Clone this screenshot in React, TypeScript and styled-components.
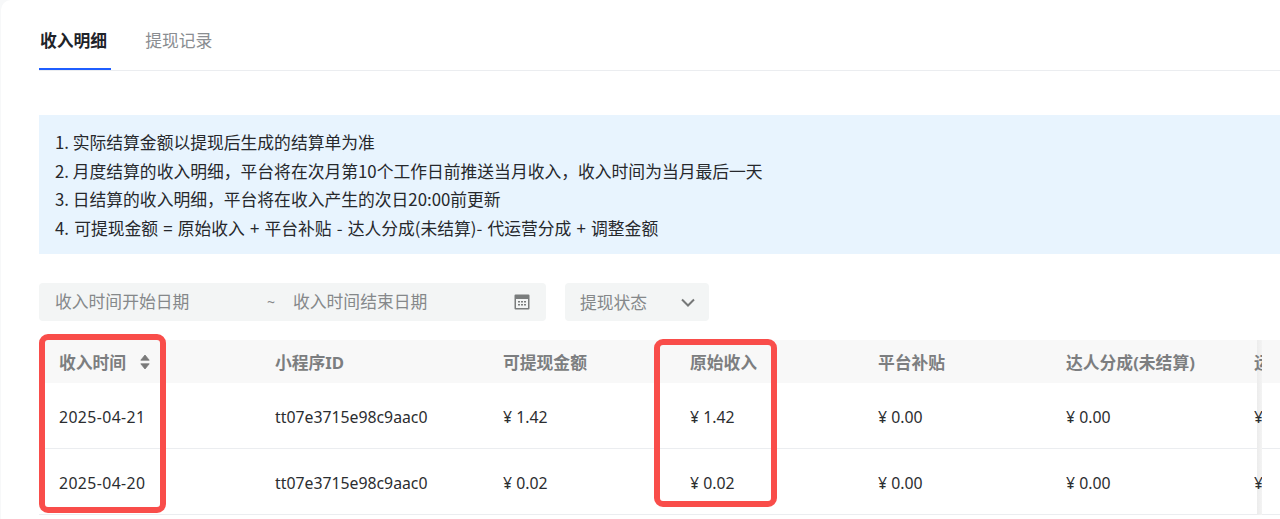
import React from "react";
import styled, { createGlobalStyle } from "styled-components";

const FONT = `"Noto Sans", "Noto Sans CJK SC", sans-serif`;

const notes = [
  { text: "1. 实际结算金额以提现后生成的结算单为准" },
  { text: "2. 月度结算的收入明细，平台将在次月第10个工作日前推送当月收入，收入时间为当月最后一天" },
  { text: "3. 日结算的收入明细，平台将在收入产生的次日20:00前更新" },
  { text: "4. 可提现金额 = 原始收入 + 平台补贴 - 达人分成(未结算)- 代运营分成 + 调整金额", spaced: true },
];

const columns = [
  { label: "收入时间", width: 216, sortable: true },
  { label: "小程序ID", width: 228 },
  { label: "可提现金额", width: 187 },
  { label: "原始收入", width: 188 },
  { label: "平台补贴", width: 188 },
  { label: "达人分成(未结算)", width: 188 },
];

const rows = [
  ["2025-04-21", "tt07e3715e98c9aac0", "¥ 1.42", "¥ 1.42", "¥ 0.00", "¥ 0.00"],
  ["2025-04-20", "tt07e3715e98c9aac0", "¥ 0.02", "¥ 0.02", "¥ 0.00", "¥ 0.00"],
];

const App: React.FC = () => {
  return (
    <>
      <GlobalStyle />
      <Card>
        <Tabs>
          <Tab $active>收入明细</Tab>
          <Tab>提现记录</Tab>
        </Tabs>
        <Notice>
          {notes.map((line) => (
            <NoteLine key={line.text} $spaced={line.spaced}>
              {line.text}
            </NoteLine>
          ))}
        </Notice>
        <Filters>
          <DateRange>
            <DateText>收入时间开始日期</DateText>
            <Tilde>~</Tilde>
            <DateText>收入时间结束日期</DateText>
            <CalendarIcon />
          </DateRange>
          <Select>
            <SelectText>提现状态</SelectText>
            <ChevronIcon />
          </Select>
        </Filters>
        <TableWrap>
          <HeadRow>
            {columns.map((col) => (
              <HeadCell key={col.label} $width={col.width}>
                {col.label}
                {col.sortable && <SortIcon />}
              </HeadCell>
            ))}
            <ClippedCell $head>
              <span>运营分成</span>
            </ClippedCell>
          </HeadRow>
          {rows.map((row) => (
            <BodyRow key={row[0]}>
              {row.map((value, i) => (
                <BodyCell key={i} $width={columns[i].width}>
                  {value}
                </BodyCell>
              ))}
              <ClippedCell>
                <span>¥ 0.00</span>
              </ClippedCell>
            </BodyRow>
          ))}
          <FixedShadow />
        </TableWrap>
        <TimeHighlight />
        <IncomeHighlight />
      </Card>
    </>
  );
};

const CalendarIcon = () => (
  <svg
    width="16"
    height="16"
    viewBox="0 0 16 16"
    style={{ flex: "none", marginLeft: "auto" }}
  >
    <path
      fillRule="evenodd"
      fill="#7a7d7d"
      d="M1.5 0.5h13a1 1 0 0 1 1 1v13a1 1 0 0 1-1 1h-13a1 1 0 0 1-1-1v-13a1 1 0 0 1 1-1zM2 5v9h12V5H2z"
    />
    <path
      fill="#7a7d7d"
      d="M4 7h2v1.5H4zM7 7h2v1.5H7zM10 7h2v1.5h-2zM4 10h2v1.5H4zM7 10h2v1.5H7zM10 10h2v1.5h-2z"
    />
  </svg>
);

const ChevronIcon = () => (
  <svg width="14" height="9" viewBox="0 0 14 9">
    <path d="M1 1.5l6 6 6-6" fill="none" stroke="#767878" strokeWidth="2" />
  </svg>
);

const SortIcon = () => (
  <svg width="10" height="16" viewBox="0 0 10 16" style={{ marginLeft: 14 }}>
    <path
      fill="#7a7a7a"
      stroke="#7a7a7a"
      strokeWidth="0.8"
      strokeLinejoin="round"
      d="M5 1l4.2 5.2h-8.4zM5 15l-4.2-5.2h8.4z"
    />
  </svg>
);

const GlobalStyle = createGlobalStyle`
  html, body {
    margin: 0;
    height: 100%;
    overflow: hidden;
    background: #f7f8f9;
    font-family: ${FONT};
  }
`;

const Card = styled.div`
  position: relative;
  width: 1279px;
  height: 519px;
  margin-left: 1px;
  box-sizing: border-box;
  padding: 0 0 0 38px;
  background: #fff;
  border-top-left-radius: 10px;
  overflow: hidden;
`;

const Tabs = styled.div`
  display: flex;
  gap: 32px;
  height: 71px;
  box-sizing: border-box;
  border-bottom: 1px solid #ebedf0;
`;

const Tab = styled.div<{ $active?: boolean }>`
  height: 70px;
  box-sizing: border-box;
  padding: 29px ${(p) => (p.$active ? "4px 0 1px" : "2px 0")};
  font-size: 16.8px;
  line-height: 24px;
  font-weight: ${(p) => (p.$active ? 700 : 400)};
  color: ${(p) => (p.$active ? "#1f2329" : "#8a8d91")};
  border-bottom: 2px solid ${(p) => (p.$active ? "#1f5eff" : "transparent")};
`;

const Notice = styled.div`
  margin-top: 44px;
  height: 139px;
  box-sizing: border-box;
  padding: 13px 16px;
  background: #e8f4fe;
  color: #26282c;
  font-family: "Noto Sans CJK SC", sans-serif;
  font-size: 16.8px;
  line-height: 28.6px;
`;

const NoteLine = styled.p<{ $spaced?: boolean }>`
  margin: 0;
  word-spacing: ${(p) => (p.$spaced ? "1.4px" : "normal")};
`;

const Filters = styled.div`
  display: flex;
  gap: 19px;
  margin-top: 29px;
`;

const fieldBase = `
  height: 38px;
  box-sizing: border-box;
  display: flex;
  align-items: center;
  background: #f3f5f5;
  border-radius: 4px;
  color: #85888a;
  font-size: 16.8px;
  line-height: 24px;
`;

const DateRange = styled.div`
  ${fieldBase}
  width: 507px;
  padding: 0 16px;
`;

const DateText = styled.span`
  width: 212px;
`;

const Tilde = styled.span`
  width: 26px;
  font-size: 14px;
`;

const Select = styled.div`
  ${fieldBase}
  width: 144px;
  padding: 0 14px 0 15px;
  justify-content: space-between;
`;

const SelectText = styled.span`
  padding-top: 1px;
`;

const TableWrap = styled.div`
  position: relative;
  margin-top: 19px;
  width: 1241px;
`;

const HeadRow = styled.div`
  display: flex;
  height: 43px;
  align-items: center;
  padding-top: 1px;
  box-sizing: border-box;
  background: #f8f8f8;
`;

const BodyRow = styled.div`
  display: flex;
  height: 66px;
  align-items: center;
  padding-top: 2px;
  border-bottom: 1px solid #ebedf0;
  box-sizing: border-box;
`;

const HeadCell = styled.div<{ $width: number }>`
  width: ${(p) => p.$width}px;
  flex: none;
  display: flex;
  align-items: center;
  font-size: 16.8px;
  font-weight: 700;
  color: #7c7e80;
  white-space: nowrap;

  &:first-child {
    padding-left: 20px;
  }
`;

const BodyCell = styled.div<{ $width: number }>`
  width: ${(p) => p.$width}px;
  flex: none;
  font-size: 15.8px;
  color: #2b2d30;
  white-space: nowrap;

  &:first-child {
    padding-left: 20px;
    letter-spacing: 0.4px;
  }
`;

const ClippedCell = styled.div<{ $head?: boolean }>`
  position: relative;
  z-index: 1;
  width: 8px;
  flex: none;
  overflow: hidden;
  white-space: nowrap;
  font-size: ${(p) => (p.$head ? 16.8 : 15.8)}px;
  font-weight: ${(p) => (p.$head ? 700 : 400)};
  color: ${(p) => (p.$head ? "#7c7e80" : "#2b2d30")};
`;

const FixedShadow = styled.div`
  position: absolute;
  top: 0;
  bottom: 0;
  left: 1218px;
  width: 5px;
  background: linear-gradient(90deg, #ececec, #f3f3f3);
  pointer-events: none;
`;

const Highlight = styled.div`
  position: absolute;
  box-sizing: border-box;
  border: 6px solid #f94d4a;
  border-radius: 9px;
  pointer-events: none;
`;

const TimeHighlight = styled(Highlight)`
  left: 38px;
  top: 334px;
  width: 127px;
  height: 179px;
`;

const IncomeHighlight = styled(Highlight)`
  left: 653px;
  top: 339px;
  width: 123px;
  height: 168px;
`;

export default App;
